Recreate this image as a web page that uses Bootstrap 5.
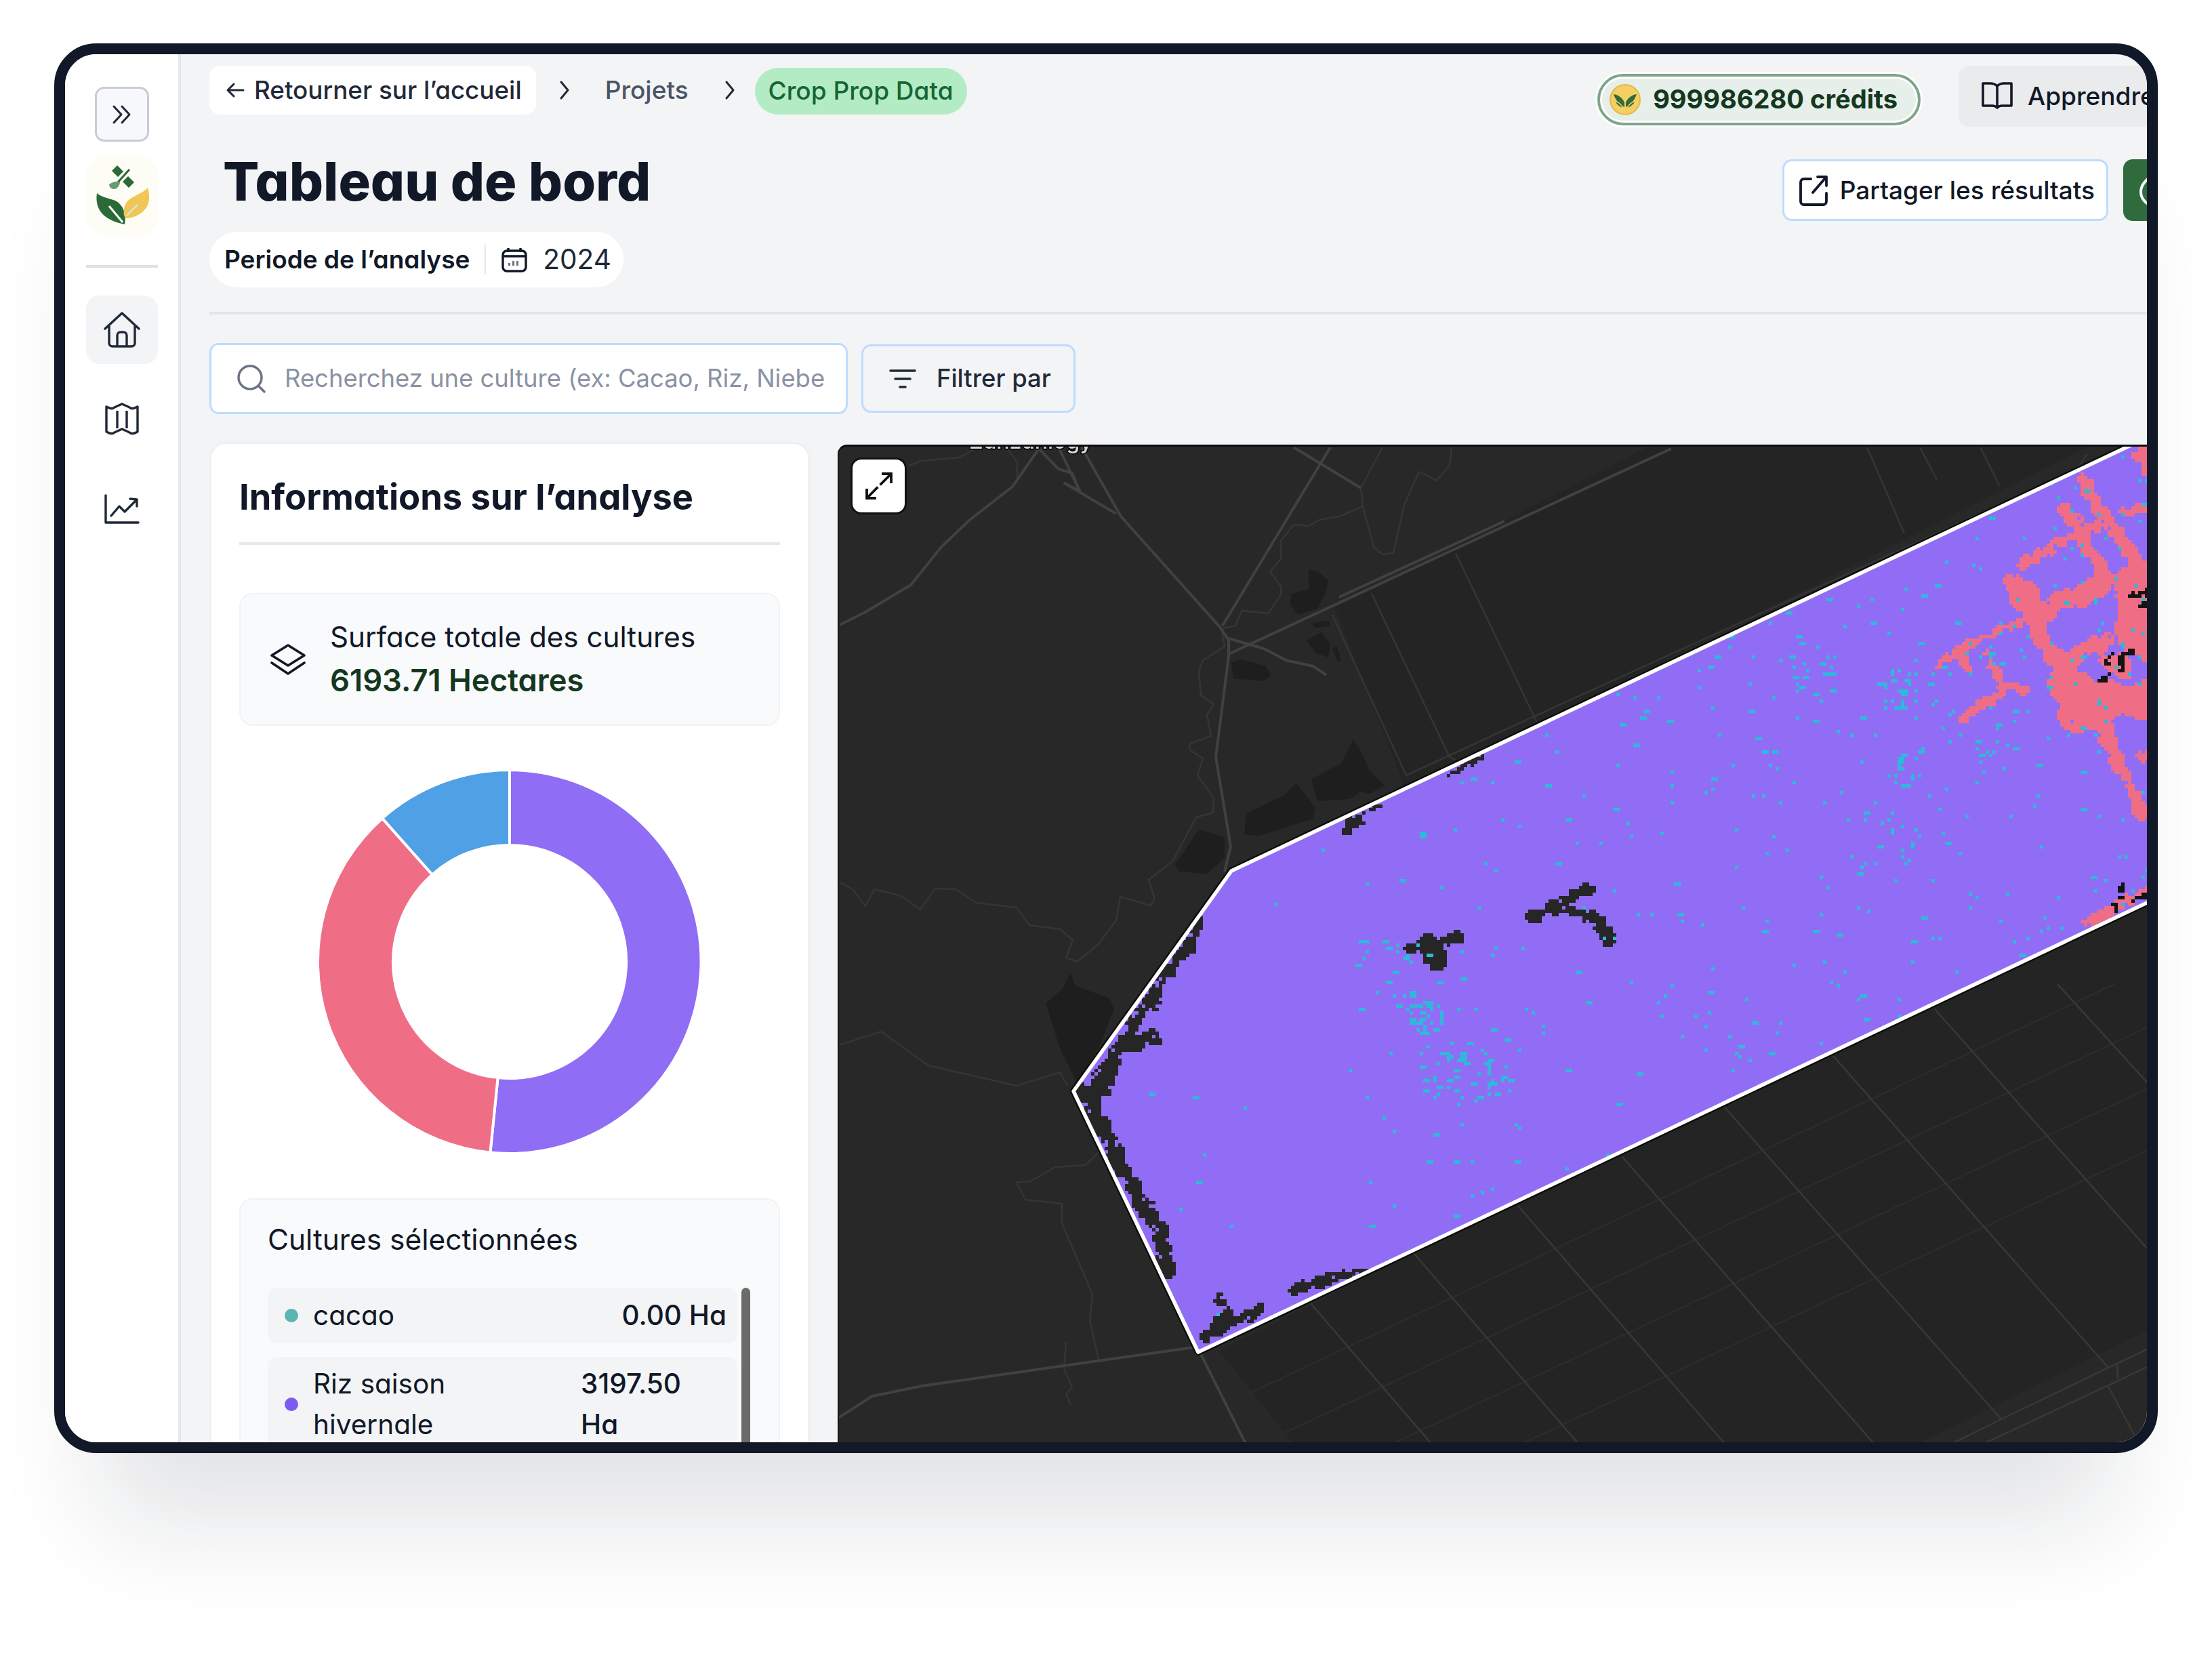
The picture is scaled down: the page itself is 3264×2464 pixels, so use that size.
<!DOCTYPE html>
<html lang="fr">
<head>
    <meta charset="UTF-8">
    <meta name="viewport" content="width=device-width, initial-scale=1.0">
    <title>Tableau de bord</title>
    <link href="https://cdn.jsdelivr.net/npm/bootstrap@5.3.0/dist/css/bootstrap.min.css" rel="stylesheet">
    <style>
        body {
            background: #fff;
            font-family: "Inter", "Liberation Sans", sans-serif;
            font-feature-settings: "cv11";
            color: #111827;
            overflow: hidden;
            height: 2464px;
        }
        svg { display: block; flex-shrink: 0; }
        .device {
            margin: 64px 0 0 80px;
            width: 3104px;
            height: 2080px;
            border: 16px solid #111827;
            border-radius: 62px;
            overflow: hidden;
            background: #f3f4f6;
            box-shadow: 0 170px 150px -70px rgba(17, 24, 39, .12);
        }
        .rail {
            width: 171px;
            flex-shrink: 0;
            background: #fff;
            border-right: 4px solid #e5e7eb;
            padding-top: 48px;
        }
        .rail-toggle {
            width: 80px;
            height: 81px;
            border: 3px solid #c9ccd6;
            border-radius: 14px;
            background: #f7f8fb;
        }
        .rail-logo {
            width: 106px;
            height: 118px;
            margin-top: 21px;
            border-radius: 30px;
            background: #fdfcf5;
        }
        .rail-line {
            width: 106px;
            height: 4px;
            margin: 43px 0 41px;
            background: #e0e1e8;
        }
        .rail-home {
            width: 106px;
            height: 101px;
            margin-bottom: 16px;
            border-radius: 20px;
            background: #f3f4f6;
        }
        .rail-item { height: 132px; }
        .board {
            flex: 0 0 2900px;
            width: 2900px;
            padding: 17px 0 0 42px;
        }
        .board-top { width: 2951px; height: 112px; }
        .crumb-trail { height: 72px; }
        .crumb-back {
            height: 72px;
            padding: 0 21px 0 24px;
            gap: 14px;
            background: #fff;
            border-radius: 16px;
            font-size: 36.8px;
            color: #1f2937;
            font-weight: 500;
        }
        .crumb-sep { margin: 0 52px 0 34px; }
        .crumb-sep-last { margin: 0 29px 0 53px; }
        .crumb-link { font-size: 37px; color: #4b5563; font-weight: 500; }
        .crumb-crop {
            height: 69px;
            margin-top: 2px;
            padding: 0 20px;
            background: #b3ebc4;
            border-radius: 35px;
            font-size: 37px;
            color: #166534;
            font-weight: 500;
        }
        .credit-pill {
            height: 76px;
            margin-top: 12px;
            padding: 0 30px 0 14px;
            gap: 18px;
            background: #e7efea;
            border: 4px solid #7fa58a;
            border-radius: 38px;
            box-shadow: 0 0 0 3px #fff, inset 0 0 0 3px #fff;
            font-size: 38.1px;
            font-weight: 700;
            color: #14381f;
        }
        .learn-btn {
            height: 90px;
            width: 370px;
            margin-left: 56px;
            padding: 0 0 0 33px;
            gap: 22px;
            background: #e9ebec;
            border-radius: 16px;
            font-size: 37px;
            font-weight: 500;
            color: #111827;
        }
        .page-title {
            margin: 0;
            padding-left: 20px;
            font-size: 79px;
            line-height: 116px;
            font-weight: 800;
            color: #111827;
        }
        .head-side { width: 2934px; }
        .share-btn {
            height: 91px;
            margin-top: 26px;
            padding: 0 17px 0 22px;
            gap: 18px;
            background: #fff;
            border: 3px solid #bfdbfe;
            border-radius: 14px;
            font-size: 37px;
            font-weight: 500;
            color: #111827;
        }
        .cloud-btn {
            height: 91px;
            width: 110px;
            margin: 26px 0 0 22px;
            padding: 0 0 0 20px;
            background: #2f6b3d;
            border-radius: 14px;
        }
        .period-pill {
            height: 82px;
            margin-top: 17px;
            padding: 0 18px 0 22px;
            background: #fff;
            border-radius: 41px;
            font-size: 37px;
        }
        .period-label { font-weight: 600; color: #111827; }
        .period-sep { width: 2px; height: 44px; margin: 0 23px 0 22px; background: #e5e7eb; }
        .period-year { margin-left: 23px; font-size: 40.5px; color: #1f2937; }
        .board-rule { height: 4px; width: 2860px; margin: 36px 0 42px; background: #e2e4e9; }
        .search-box {
            width: 942px;
            height: 105px;
            padding: 0 0 0 38px;
            gap: 28px;
            background: #fff;
            border: 3px solid #bfdbfe;
            border-radius: 14px;
        }
        .search-box .form-control {
            padding: 0;
            border: 0;
            background: transparent;
            box-shadow: none;
            font-size: 36.4px;
            font-weight: 400;
        }
        .search-box .form-control::placeholder { color: #8a92a3; opacity: 1; }
        .filter-btn {
            width: 316px;
            height: 101px;
            margin: 2px 0 0 20px;
            padding: 0 0 0 38px;
            gap: 30px;
            border: 3px solid #bfdbfe;
            border-radius: 14px;
            font-size: 36.4px;
            font-weight: 500;
            color: #1f2937;
        }
        .search-row { margin-bottom: 41px; }
        .info-card {
            width: 886px;
            flex-shrink: 0;
            height: 1600px;
            padding: 0 41px;
            background: #fff;
            border: 3px solid #eff0f3;
            border-radius: 24px;
        }
        .info-title {
            height: 149px;
            margin: 0;
            padding-top: 20px;
            font-size: 52.4px;
            font-weight: 700;
            border-bottom: 4px solid #e7e8ee;
            line-height: 116px;
            color: #111827;
        }
        .surface-box {
            height: 196px;
            margin-top: 71px;
            padding: 0 0 0 44px;
            gap: 36px;
            background: #f9fafb;
            border: 2px solid #f1f2f4;
            border-radius: 20px;
        }
        .surface-label { font-size: 42.2px; line-height: 62px; color: #111827; }
        .surface-value { font-size: 45.3px; line-height: 66px; font-weight: 600; color: #14381f; }
        .donut-wrap { margin-top: 58px; height: 580px; }
        .crop-box {
            margin-top: 59px;
            padding: 29px 42px 0 40px;
            background: #f9fafb;
            border: 2px solid #f1f2f4;
            border-radius: 20px;
        }
        .crop-heading { font-size: 42.4px; line-height: 60px; margin-bottom: 41px; color: #111827; }
        .crop-row {
            min-height: 82px;
            margin-bottom: 20px;
            padding: 10px 16px 10px 25px;
            background: #f3f4f6;
            border-radius: 14px;
            font-size: 40.5px;
            line-height: 60px;
            color: #111827;
        }
        .crop-dot { width: 20px; height: 20px; margin-right: 22px; border-radius: 50%; flex-shrink: 0; }
        .crop-dot-teal { background: #5bb5b0; }
        .crop-dot-violet { background: #7c5cf0; }
        .crop-value { font-weight: 500; white-space: nowrap; }
        .crop-value-wrap { width: 215px; flex-shrink: 0; }
        .crop-thumb { width: 13px; flex-shrink: 0; background: #6b6b6b; border-radius: 7px; margin-left: 6px; }
        .map-panel {
            width: 1932px;
            height: 1500px;
            margin: 4px 0 0 41px;
            flex-shrink: 0;
            position: relative;
            background: #282828;
            border-top: 3px solid #0c0c0c;
            border-left: 2px solid #141414;
            border-radius: 14px 0 0 0;
            overflow: hidden;
        }
        .map-label {
            font-size: 32px;
            font-weight: 500;
            fill: #d8d8d8;
            stroke: #000;
            stroke-width: 3px;
            paint-order: stroke;
        }
        .map-expand {
            position: absolute;
            left: 17px;
            top: 16px;
            width: 83px;
            height: 84px;
            background: #fff;
            border: 3px solid #111;
            border-radius: 16px;
        }
    </style>
</head>
<body>
    <div class="device d-flex">
        <aside class="rail d-flex flex-column align-items-center">
            <button class="rail-toggle btn p-0 d-flex align-items-center justify-content-center" type="button">
                <svg width="30" height="30" viewBox="0 0 30 30" fill="none" stroke="#1f2937" stroke-width="3" stroke-linecap="round" stroke-linejoin="round"><path d="M3 3l11 12-11 12M15 3l11 12-11 12"/></svg>
            </button>
            <div class="rail-logo">
                <svg width="106" height="118" viewBox="0 0 106 118">
                    <path d="M16 55C13 76 22 94 57 101 60 86 55 72 43 66 31 62 21 60 16 55Z" fill="#2a6a38"/>
                    <path d="M34 74L54 98" stroke="#fff" stroke-width="3"/>
                    <path d="M91 47C81 58 61 60 57 74 55 82 55 87 58 92 72 92 87 84 92 70 94 62 93 54 91 47Z" fill="#f1c654"/>
                    <path d="M60 88L76 72" stroke="#d7e3d0" stroke-width="3"/>
                    <path d="M38 22l8-8 9 9-8 8zM54 38l8-8 9 9-8 8z" fill="#2a6a38"/>
                    <path d="M64 20L46 40" stroke="#2a6a38" stroke-width="3"/>
                    <path d="M34 42c5-4 11-5 16-4 0 6-4 11-9 11-4 0-7-3-7-7z" fill="#6a9a75"/>
                </svg>
            </div>
            <div class="rail-line"></div>
            <div class="rail-home d-flex align-items-center justify-content-center">
                <svg width="54" height="54" viewBox="0 0 54 54" fill="none" stroke="#1f2937" stroke-width="3.4" stroke-linejoin="round" stroke-linecap="round"><path d="M2 25L27 2l25 23M8 21v25c0 3 2 5 5 5h28c3 0 5-2 5-5V21M20 51V35c0-3 2-5 5-5h4c3 0 5 2 5 5v16"/></svg>
            </div>
            <div class="rail-item d-flex align-items-center justify-content-center">
                <svg width="50" height="52" viewBox="0 0 50 52" fill="none" stroke="#1f2937" stroke-width="3.4" stroke-linejoin="round"><path d="M2 7c5 3 9 4 12 1l11-5 11 5c3 3 7 2 12-1v37c-5 3-9 4-12 1l-11-5-11 5c-3 3-7 2-12-1z"/><path d="M18 13v26M32 13v26"/></svg>
            </div>
            <div class="rail-item d-flex align-items-center justify-content-center">
                <svg width="52" height="44" viewBox="0 0 52 44" fill="none" stroke="#1f2937" stroke-width="3.4" stroke-linejoin="round" stroke-linecap="round"><path d="M2 2v40h48M10 32l12-14 8 8 18-18M38 7l10 1v10"/></svg>
            </div>
        </aside>

        <main class="board">
            <div class="board-top d-flex align-items-start">
                <div class="crumb-trail d-flex align-items-center">
                    <a class="crumb-back d-flex align-items-center text-decoration-none" href="#">
                        <svg width="28" height="24" viewBox="0 0 28 24" fill="none" stroke="#1f2937" stroke-width="3" stroke-linecap="round" stroke-linejoin="round"><path d="M26 12H4M12 3l-9 9 9 9"/></svg>
                        Retourner sur l’accueil
                    </a>
                    <svg class="crumb-sep" width="16" height="30" viewBox="0 0 16 30" fill="none" stroke="#1f2937" stroke-width="3" stroke-linecap="round" stroke-linejoin="round"><path d="M3 3l10 12-10 12"/></svg>
                    <a class="crumb-link text-decoration-none" href="#">Projets</a>
                    <svg class="crumb-sep-last" width="16" height="30" viewBox="0 0 16 30" fill="none" stroke="#1f2937" stroke-width="3" stroke-linecap="round" stroke-linejoin="round"><path d="M3 3l10 12-10 12"/></svg>
                    <span class="crumb-crop d-flex align-items-center">Crop Prop Data</span>
                </div>
                <div class="credit-pill d-flex align-items-center ms-auto">
                    <svg width="46" height="46" viewBox="0 0 46 46">
                        <circle cx="23" cy="23" r="22" fill="#f5cf63" stroke="#e3b94a" stroke-width="2"/>
                        <path d="M22 34C15 31 9 24 6 15c8 1 13 6 16 12zM24 34c7-3 13-10 16-19-8 1-13 6-16 12z" fill="#2f6b3d"/>
                        <path d="M20 36c-6-2-10-6-13-11 6 1 10 4 13 11zM26 36c6-2 10-6 13-11-6 1-10 4-13 11z" fill="#2f6b3d" stroke="#f5cf63" stroke-width="1.4"/>
                    </svg>
                    999986280 crédits
                </div>
                <button class="learn-btn btn d-flex align-items-center" type="button">
                    <svg width="46" height="46" viewBox="0 0 46 46" fill="none" stroke="#111827" stroke-width="3.6" stroke-linejoin="round" stroke-linecap="round"><path d="M23 8c-3-3-6-4-10-4H2v33h14c3 0 5 1 7 3 2-2 4-3 7-3h14V4H33c-4 0-7 1-10 4zM23 8v32"/></svg>
                    Apprendre
                </button>
            </div>

            <div class="head-side d-flex justify-content-between align-items-start">
                <div>
                    <h1 class="page-title">Tableau de bord</h1>
                    <div class="period-pill d-inline-flex align-items-center">
                        <span class="period-label">Periode de l’analyse</span>
                        <span class="period-sep"></span>
                        <svg width="38" height="38" viewBox="0 0 38 38" fill="none" stroke="#111827" stroke-width="3.4" stroke-linejoin="round"><rect x="2" y="6" width="34" height="30" rx="6"/><path d="M2 14h34M10 2v6M28 2v6"/><path d="M10 28h3v-4h-3zM16 28h3v-7h-3zM22 28h3v-7h-3z" fill="#6b7280" stroke="none"/></svg>
                        <span class="period-year">2024</span>
                    </div>
                </div>
                <div class="d-flex">
                    <button class="share-btn btn d-flex align-items-center" type="button">
                        <svg width="42" height="46" viewBox="0 0 42 46" fill="none" stroke="#111827" stroke-width="3.8" stroke-linecap="round" stroke-linejoin="round"><path d="M17 6H7C4 6 2 8 2 11v28c0 3 2 5 5 5h28c3 0 5-2 5-5V27M20 26L39 4M27 3h13v13"/></svg>
                        Partager les résultats
                    </button>
                    <button class="cloud-btn btn d-flex align-items-center" type="button">
                        <svg width="48" height="50" viewBox="0 0 48 50" fill="none" stroke="#fff" stroke-width="4"><path d="M24 3c9 3 16 10 18 22 1 12-8 22-18 22S5 38 5 27C5 18 12 8 24 3z"/></svg>
                    </button>
                </div>
            </div>

            <div class="board-rule"></div>

            <div class="search-row d-flex align-items-start">
                <div class="search-box d-flex align-items-center">
                    <svg width="42" height="42" viewBox="0 0 42 42" fill="none" stroke="#6b7280" stroke-width="3.4" stroke-linecap="round"><circle cx="19" cy="19" r="17"/><path d="M32 32l8 8"/></svg>
                    <input class="form-control" type="text" placeholder="Recherchez une culture (ex: Cacao, Riz, Niebe">
                </div>
                <button class="filter-btn btn d-flex align-items-center" type="button">
                    <svg width="40" height="30" viewBox="0 0 40 30" fill="none" stroke="#1f2937" stroke-width="3.6" stroke-linecap="round"><path d="M2 3h36M9 15h22M16 27h8"/></svg>
                    Filtrer par
                </button>
            </div>

            <div class="d-flex align-items-start">
                <section class="info-card card">
                    <h2 class="info-title">Informations sur l’analyse</h2>
                    <div class="surface-box d-flex align-items-center">
                        <svg width="52" height="46" viewBox="0 0 52 46" fill="none" stroke="#111827" stroke-width="3.6" stroke-linejoin="round" stroke-linecap="round"><path d="M26 2l24 15-24 15L2 17zM2 28l24 16 24-16"/></svg>
                        <div>
                            <div class="surface-label">Surface totale des cultures</div>
                            <div class="surface-value">6193.71 Hectares</div>
                        </div>
                    </div>
                    <div class="donut-wrap d-flex justify-content-center">
                        <svg width="580" height="580" viewBox="-290 -290 580 580" stroke="#fff" stroke-width="4">
                            <path d="M0 -283A283 283 0 1 1 -28.6 281.6L-17.4 171.1A172 172 0 1 0 0 -172Z" fill="#8f6df5"/>
                            <path d="M-28.6 281.6A283 283 0 0 1 -187.9 -211.6L-114.2 -128.6A172 172 0 0 0 -17.4 171.1Z" fill="#f06e85"/>
                            <path d="M-187.9 -211.6A283 283 0 0 1 0 -283L0 -172A172 172 0 0 0 -114.2 -128.6Z" fill="#4fa0e5"/>
                        </svg>
                    </div>
                    <div class="crop-box">
                        <div class="crop-heading">Cultures sélectionnées</div>
                        <div class="d-flex">
                            <div class="flex-grow-1">
                                <div class="crop-row d-flex align-items-center">
                                    <span class="crop-dot crop-dot-teal"></span>
                                    <span class="flex-grow-1">cacao</span>
                                    <span class="crop-value">0.00 Ha</span>
                                </div>
                                <div class="crop-row d-flex align-items-center">
                                    <span class="crop-dot crop-dot-violet"></span>
                                    <span class="flex-grow-1">Riz saison<br>hivernale</span>
                                    <span class="crop-value crop-value-wrap">3197.50<br>Ha</span>
                                </div>
                            </div>
                            <div class="crop-thumb"></div>
                        </div>
                    </div>
                </section>

                <section class="map-panel">
                    <svg width="1932" height="1500" viewBox="1238 657 1932 1500" fill="none" stroke-linejoin="round">
                        <g fill="#242424">
                            <path d="M1970 895L2430 658H3170V612L2075 1165Z"/>
                            <path d="M1800 1991L3170 1300V1960L2830 2128H1908Z"/>
                        </g>
                        <g fill="#1e1e1e">
                            <path d="M1931 838L1944 841 1960 854 1957 872 1944 896 1915 905 1904 890 1906 874 1931 867Z"/>
                            <path d="M1935 917L1960 914 1963 921 1941 925Z"/>
                            <path d="M1928 943L1950 931 1963 948 1960 968 1941 961Z"/>
                            <path d="M1966 954L1973 952 1979 972 1974 975Z"/>
                            <path d="M1817 975L1832 971 1868 981 1876 995 1864 1003 1820 999Z"/>
                            <path d="M1935 1148L1979 1124 1997 1088 2011 1113 2021 1135 2043 1157 2021 1169 2008 1166 1992 1177 1944 1180Z"/>
                            <path d="M1839 1198L1896 1171 1912 1153 1941 1189 1938 1206 1858 1231 1836 1229Z"/>
                            <path d="M1734 1273L1769 1222 1807 1233 1807 1264 1781 1287 1740 1284Z"/>
                            <path d="M1543 1478L1567 1458 1580 1433 1586 1452 1637 1471 1644 1487 1621 1545 1589 1596 1564 1545Z"/>
                        </g>
                        <g stroke="#353535" stroke-width="2.5">
                            <path d="M2040 658L2008 718 2011 745 1976 760 1947 765 1931 774 1909 772 1890 796 1890 823 1874 841 1890 863 1890 876 1871 903 1832 899 1823 921 1804 925 1804 937 1807 952 1775 972 1769 988 1772 1024 1791 1037 1781 1053 1787 1084 1756 1095 1755 1104 1775 1117 1767 1142 1791 1175 1790 1197 1765 1204 1730 1269 1695 1296 1704 1324 1698 1334 1653 1321 1647 1356 1621 1391 1589 1417 1573 1411 1583 1385 1564 1369 1519 1363 1500 1337 1440 1330 1410 1310 1380 1309 1358 1340 1330 1320 1290 1310 1277 1335 1258 1310 1240 1300"/>
                            <path d="M2011 745L2027 805 2040 816 2056 814 2072 743 2094 694 2120 707 2139 685 2142 658"/>
                            <path d="M1341 685L1360 678 1415 673 1440 660M1488 662L1501 680 1501 702M1500 1742L1519 1742 1557 1720 1602 1717 1621 1698M1500 1742L1513 1768 1567 1774 1567 1803 1612 1908 1608 1946 1621 2004M1573 1978L1570 2017 1582 2045 1573 2055 1580 2071M1238 1540L1300 1520 1370 1570 1500 1600 1564 1580 1575 1600"/>
                            <path d="M1966 905L2075 1142 2220 1075 3064 691 3080 668M2024 874L2139 1115 2148 1119M2148 814L2290 1110M2755 658L2810 785M2833 658L2858 706M2922 658L2951 716"/>
                        </g>
                        <g stroke="#414141" stroke-width="4">
                            <path d="M1596 658L1654 760 1800 923 1813 943 1813 966 1794 1115 1816 1247 1807 1284"/>
                            <path d="M1813 963L2466 660M1976 879L2220 767"/>
                            <path d="M1239 920L1277 901 1344 861 1389 805 1431 765 1494 716 1533 660"/>
                            <path d="M1533 660L1562 690 1582 696 1593 722 1571 711 1647 756M1562 658L1593 722M1813 940L1865 955 1897 972 1938 981 1957 994M1963 658L1804 921M1909 658L2008 718"/>
                            <path d="M1237 2090L1287 2058 1360 2043 1500 2023 1768 1985M1771 1994L1838 2128"/>
                        </g>
                        <g stroke="#2c2c2c" stroke-width="2.5">
                            <path d="M1848 2052L3120 1450M1896 2112L3170 1513M2055 2128L3170 1604M2246 2128L3170 1695"/>
                        </g>
                        <g stroke="#383838" stroke-width="2.5">
                            <path d="M1934 1921L2112 2128M2087 1848L2329 2128M2240 1777L2545 2128M2393 1704L2767 2130M2545 1632L2953 2092M2705 1556L3111 2016M2855 1487L3170 1842M3036 1450L3170 1597"/>
                            <path d="M2880 2128L2953 2092 3111 2016 3170 1988M2927 2128L3111 2042 3170 2014M3111 2044L3152 2120M3124 2010L3125 2032"/>
                        </g>
                        <text class="map-label" x="1430" y="660">Zanzanlogy</text>
                        <path d="M1817 1283L3144 655 3230 614V1301L3168 1330 1768 1993 1584 1608Z" stroke="#0a0a0a" stroke-width="10"/>
                        <path d="M1817 1283L3144 655 3230 614V1301L3168 1330 1768 1993 1584 1608Z" fill="#916df5"/>
                        <clipPath id="plotClip"><path d="M1817 1283L3144 655 3230 614V1301L3168 1330 1768 1993 1584 1608Z"/></clipPath>
                        <g clip-path="url(#plotClip)">
                            <path id="cellsDark" fill="#262626"/>
                            <path id="cellsPink" fill="#f06e85"/>
                            <path id="cellsCyan" fill="#2fb8da"/>
                            <path id="cellsBlack" fill="#141414"/>
                        </g>
                        <path d="M1817 1283L3144 655 3230 614V1301L3168 1330 1768 1993 1584 1608Z" stroke="#fff" stroke-width="5.5"/>
                    </svg>
                    <button class="map-expand btn p-0 d-flex align-items-center justify-content-center" type="button">
                        <svg width="42" height="42" viewBox="0 0 42 42" fill="none" stroke="#111" stroke-width="3.8" stroke-linecap="square"><path d="M24 18L38 4M27 3h12v12M18 24L4 38M3 27v12h12"/></svg>
                    </button>
                </section>
            </div>
        </main>
    </div>

    <script>
        // the crop raster on the map: 5px cells rasterised from hand-traced strokes
        let seed = 20240;
        function rand() {
            seed = (seed + 0x6D2B79F5) | 0;
            let t = Math.imul(seed ^ (seed >>> 15), 1 | seed);
            t = (t + Math.imul(t ^ (t >>> 7), 61 | t)) ^ t;
            return ((t ^ (t >>> 14)) >>> 0) / 4294967296;
        }

        const CELL = 5;
        const lower = ([x, y]) => [1500 + x * .638, 1200 + y * .638];
        const right = ([x, y]) => [2600 + x * .4235, 640 + y * .51];
        const upper = ([x, y]) => [1220 + x * .638, 640 + y * .446];

        function paintStroke(cells, pts, radius, keep = .82) {
            for (let i = 0; i < pts.length - 1; i++) {
                const [ax, ay] = pts[i], [bx, by] = pts[i + 1];
                const steps = Math.max(1, Math.ceil(Math.hypot(bx - ax, by - ay) / 6));
                for (let s = 0; s <= steps; s++) {
                    const px = ax + (bx - ax) * s / steps + (rand() - .5) * radius;
                    const py = ay + (by - ay) * s / steps + (rand() - .5) * radius;
                    const r = radius * (.35 + rand() * .8);
                    for (let x = px - r; x <= px + r; x += CELL) {
                        for (let y = py - r; y <= py + r; y += CELL) {
                            if (Math.hypot(x - px, y - py) <= r + 1 && rand() < keep) {
                                cells.add(Math.floor(x / CELL) + ',' + Math.floor(y / CELL));
                            }
                        }
                    }
                }
            }
        }

        function cellsToPath(cells) {
            let d = '';
            cells.forEach(key => {
                const [x, y] = key.split(',').map(Number);
                d += `M${x * CELL} ${y * CELL}h${CELL}v${CELL}h-${CELL}z`;
            });
            return d;
        }

        const darkCells = new Set(), pinkCells = new Set(), cyanCells = new Set(), blackCells = new Set();

        // dark gaps on the lower left and along the fence
        [
            [[[420, 250], [400, 300], [350, 360], [320, 430], [270, 480], [250, 530]], 8],
            [[[255, 525], [325, 520]], 12],
            [[[250, 530], [205, 600], [180, 650], [175, 700]], 13],
            [[[140, 640], [175, 640]], 16],
            [[[175, 700], [210, 740], [240, 810], [275, 860], [290, 910], [335, 960], [350, 1060]], 10],
            [[[470, 1110], [490, 1160], [430, 1210]], 6],
            [[[430, 1205], [520, 1165], [565, 1145]], 7],
            [[[640, 1105], [720, 1075], [810, 1050]], 7],
            [[[920, 310], [1030, 285]], 9],
            [[[965, 300], [975, 340]], 16],
            [[[1190, 240], [1240, 220], [1290, 190], [1325, 165]], 8],
            [[[1280, 220], [1340, 240], [1375, 300]], 9],
            [[[770, 35], [800, 10]], 6],
        ].forEach(([pts, r]) => paintStroke(darkCells, pts.map(lower), r));
        [
            [[[1205, 1310], [1215, 1275], [1240, 1260]], 6],
            [[[1450, 1125], [1470, 1090], [1520, 1070]], 5],
            [[[1260, 1235], [1280, 1225]], 3],
        ].forEach(([pts, r]) => paintStroke(darkCells, pts.map(upper), r));

        // pink veins in the north east corner
        [
            [[[960, 530], [1100, 465], [1200, 430], [1340, 400]], 14],
            [[[1340, 470], [1290, 540], [1345, 570]], 30],
            [[[1200, 590], [1090, 640], [1060, 680]], 11],
            [[[1085, 700], [1095, 790], [1340, 760]], 26],
            [[[1170, 820], [1250, 960], [1340, 1110]], 10],
            [[[955, 560], [980, 600], [1060, 670]], 10],
            [[[875, 415], [945, 520]], 15],
            [[[905, 375], [1000, 330], [1110, 280], [1190, 250]], 7],
            [[[1050, 210], [1100, 260], [1190, 400]], 8],
            [[[1100, 110], [1190, 230], [1290, 340], [1340, 390]], 8],
            [[[600, 665], [680, 625], [760, 590], [900, 540]], 6],
            [[[690, 640], [720, 690]], 6],
            [[[780, 620], [840, 730], [930, 735]], 6],
            [[[700, 820], [740, 790], [840, 745]], 6],
            [[[1260, 225], [1340, 210]], 6],
            [[[1320, 50], [1340, 100]], 9],
            [[[1140, 1410], [1250, 1360], [1340, 1320]], 7],
            [[[1320, 930], [1345, 930]], 6],
            [[[1200, 660], [1280, 690]], 15],
        ].forEach(([pts, r]) => paintStroke(pinkCells, pts.map(right), r, .95));

        [
            [[[1295, 465], [1345, 460]], 5],
            [[[1320, 492], [1345, 495]], 3],
            [[[1195, 660], [1225, 635], [1290, 630]], 3],
            [[[1180, 710], [1220, 695]], 4],
            [[[1260, 640], [1255, 680]], 3],
            [[[1255, 1310], [1262, 1340]], 5],
            [[[1235, 1350], [1240, 1380]], 3],
            [[[1290, 1350], [1345, 1335]], 3],
        ].forEach(([pts, r]) => paintStroke(blackCells, pts.map(right), r));

        // cyan speckle, thicker towards the east
        function inPlot(x, y) {
            const top = 1283 - (x - 1817) * .4733;
            const bottom = 1993 - (x - 1768) * .4736;
            return y > top && y < bottom && x > 1584 && y > 1608 - (x - 1584) * 1.39;
        }
        function dropCell(x, y, wide) {
            if (!inPlot(x, y)) return;
            cyanCells.add(Math.floor(x / CELL) + ',' + Math.floor(y / CELL));
            if (wide) cyanCells.add((Math.floor(x / CELL) + 1) + ',' + Math.floor(y / CELL));
        }
        for (let i = 0; i < 1400; i++) {
            const x = 1650 + rand() * 1520, y = 660 + rand() * 1300;
            const chance = x < 2000 ? .1 : x < 2500 ? .4 : .75;
            if (rand() < chance) dropCell(x, y, rand() < .25);
        }
        [
            [2106, 1500, 24, 30], [2157, 1583, 45, 40], [2042, 1430, 45, 18], [2130, 1570, 40, 14],
            [2200, 1600, 30, 10], [2110, 1440, 50, 14], [2800, 1020, 30, 18], [2830, 1010, 40, 12],
            [2680, 1000, 35, 16], [2810, 1130, 30, 16], [2790, 1240, 40, 12], [2950, 1100, 40, 12],
        ].forEach(([cx, cy, spread, count]) => {
            for (let i = 0; i < count; i++) {
                dropCell(cx + (rand() - .5) * 2 * spread, cy + (rand() - .5) * 2 * spread, rand() < .3);
            }
        });

        document.getElementById('cellsDark').setAttribute('d', cellsToPath(darkCells));
        document.getElementById('cellsPink').setAttribute('d', cellsToPath(pinkCells));
        document.getElementById('cellsCyan').setAttribute('d', cellsToPath(cyanCells));
        document.getElementById('cellsBlack').setAttribute('d', cellsToPath(blackCells));
    </script>
    <script src="https://cdn.jsdelivr.net/npm/bootstrap@5.3.0/dist/js/bootstrap.bundle.min.js"></script>
</body>
</html>
